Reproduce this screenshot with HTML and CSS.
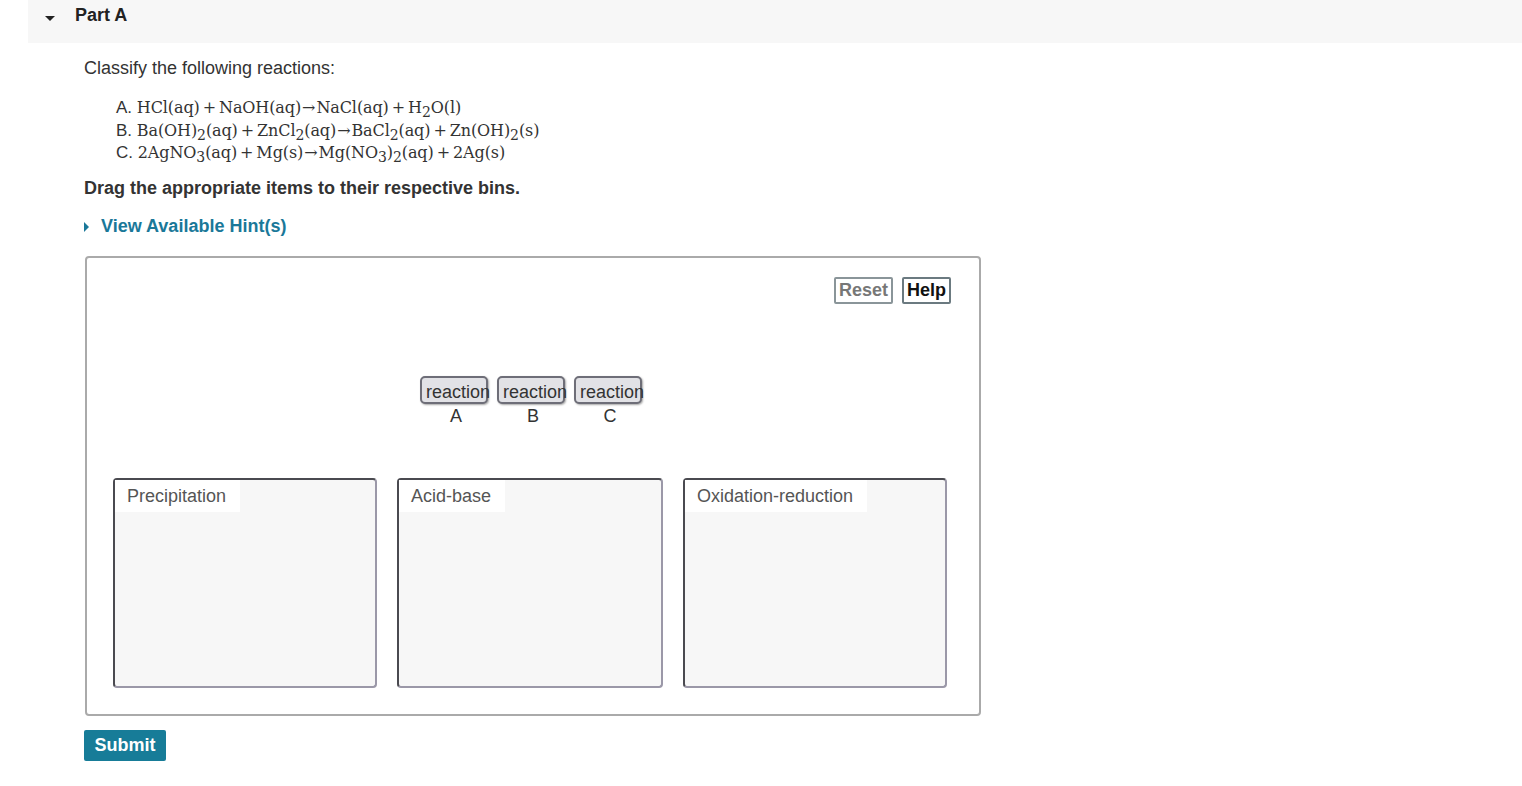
FILE: index.html
```html
<!DOCTYPE html>
<html>
<head>
    <title>Part A</title>
    <link rel="stylesheet" href="styles.css">
</head>
<body>

<div class="part-header">
    <span class="caret-down"></span>
    <h3>Part A</h3>
</div>

<div class="part-body">
    <p class="prompt">Classify the following reactions:</p>

    <div class="equations">
        <div>A. <span class="chem">HCl(aq)<span class="op">+</span>NaOH(aq)<span class="arrow">→</span>NaCl(aq)<span class="op">+</span>H<sub>2</sub>O(l)</span></div>
        <div>B. <span class="chem">Ba(OH)<sub>2</sub>(aq)<span class="op">+</span>ZnCl<sub>2</sub>(aq)<span class="arrow">→</span>BaCl<sub>2</sub>(aq)<span class="op">+</span>Zn(OH)<sub>2</sub>(s)</span></div>
        <div>C. <span class="chem">2AgNO<sub>3</sub>(aq)<span class="op">+</span>Mg(s)<span class="arrow">→</span>Mg(NO<sub>3</sub>)<sub>2</sub>(aq)<span class="op">+</span>2Ag(s)</span></div>
    </div>

    <p class="instructions">Drag the appropriate items to their respective bins.</p>

    <a class="hint-link" href="#"><span class="caret-right"></span>View Available Hint(s)</a>

    <div class="dnd-box">
        <div class="toolbar">
            <button class="tool-btn reset">Reset</button>
            <button class="tool-btn">Help</button>
        </div>

        <div class="items">
            <div class="chip">reaction A</div>
            <div class="chip">reaction B</div>
            <div class="chip">reaction C</div>
        </div>

        <div class="bins">
            <div class="bin"><span class="bin-label">Precipitation</span></div>
            <div class="bin"><span class="bin-label">Acid-base</span></div>
            <div class="bin"><span class="bin-label">Oxidation-reduction</span></div>
        </div>
    </div>

    <button class="submit">Submit</button>
</div>

</body>
</html>
```

FILE: styles.css
```css
body {
    margin: 0;
    font-family: "Liberation Sans", Arial, sans-serif;
    font-size: 18px;
    color: #333;
    background-color: #fff;
}

.part-header {
    margin-left: 28px;
    height: 43px;
    background-color: #f7f7f7;
    display: flex;
    align-items: flex-start;
}

.caret-down {
    width: 0;
    height: 0;
    margin: 16px 0 0 17px;
    border-left: 5px solid transparent;
    border-right: 5px solid transparent;
    border-top: 5px solid #222;
}

.part-header h3 {
    margin: 5px 0 0 20px;
    font-size: 18px;
    font-weight: bold;
    color: #222;
}

.part-body {
    padding-left: 84px;
}

.prompt {
    margin: 13px 0 0;
    line-height: 24px;
}

.equations {
    margin: 17px 0 0 32px;
    line-height: 22.5px;
    font-size: 17px;
}

.chem {
    font-family: "DejaVu Serif", "Liberation Serif", serif;
    font-size: 16px;
    letter-spacing: -0.1px;
}

.chem sub {
    font-size: 14px;
    vertical-align: -4px;
    line-height: 0;
}

.op {
    margin: 0 3px;
}

.arrow {
    margin: 0 1px;
}

.instructions {
    margin: 11px 0 0;
    font-weight: bold;
    line-height: 24px;
}

.hint-link {
    display: inline-flex;
    align-items: center;
    margin-top: 14px;
    font-weight: bold;
    color: #1a7899;
    text-decoration: none;
    line-height: 24px;
}

.caret-right {
    width: 0;
    height: 0;
    margin: 2px 12px 0 0;
    border-top: 5px solid transparent;
    border-bottom: 5px solid transparent;
    border-left: 5px solid #1a7899;
}

.dnd-box {
    width: 892px;
    height: 456px;
    margin: 18px 0 0 1px;
    border: 2px solid #aaa;
    border-radius: 4px;
    box-sizing: content-box;
}

.toolbar {
    display: flex;
    justify-content: flex-end;
    gap: 9px;
    padding: 19px 28px 0 0;
}

.tool-btn {
    height: 27px;
    padding: 0 3px;
    font-family: "Liberation Sans", Arial, sans-serif;
    font-size: 18px;
    font-weight: bold;
    color: #111;
    background-color: #fff;
    border: 2px solid #6b7a80;
    border-radius: 2px;
    line-height: 22px;
}

.tool-btn.reset {
    color: #777;
    border-color: #8a9599;
}

.items {
    display: flex;
    gap: 9px;
    padding-left: 333px;
    margin-top: 72px;
    height: 102px;
}

.chip {
    width: 68px;
    height: 28px;
    box-sizing: border-box;
    padding: 2px 0 0 4px;
    border: 2px solid #6e6e78;
    border-radius: 5px;
    background-color: #e2e2e6;
    box-shadow: 1px 1px 2px rgba(0, 0, 0, 0.35);
    line-height: 24px;
    color: #333;
    text-align: center;
    word-spacing: 20px;
}

.bins {
    display: grid;
    grid-template-columns: 264px 266px 264px;
    gap: 20px;
    padding-left: 26px;
}

.bin {
    height: 210px;
    box-sizing: border-box;
    background-color: #f7f7f7;
    border: 2px solid #9b98a8;
    border-top-color: #4a4a50;
    border-left-color: #4a4a50;
    border-radius: 4px;
}

.bin-label {
    display: inline-block;
    padding: 4px 14px 4px 12px;
    background-color: #fff;
    color: #555;
    line-height: 24px;
}

.submit {
    margin-top: 14px;
    width: 82px;
    height: 31px;
    background-color: #177c98;
    color: #fff;
    font-family: "Liberation Sans", Arial, sans-serif;
    font-size: 18px;
    font-weight: bold;
    border: none;
    border-radius: 2px;
}
```
